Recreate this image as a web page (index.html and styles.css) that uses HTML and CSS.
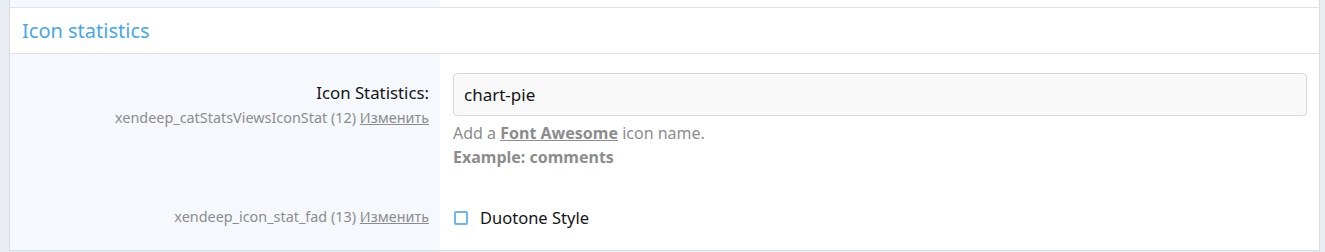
FILE: index.html
```html
<!DOCTYPE html>
<html lang="ru">
<head>
  <meta charset="UTF-8" />
  <title>Options</title>
  <link rel="stylesheet" href="styles.css">
</head>
<body>
  <div class="block">
    <div class="form-row top-row">
      <div class="form-label"></div>
      <div class="form-input"></div>
    </div>
    <h3 class="block-header">Icon statistics</h3>
    <div class="form-body">
      <div class="form-row first-row">
        <div class="form-label">
          <label class="label-main">Icon Statistics:</label>
          <div class="label-hint">xendeep_catStatsViewsIconStat (12) <a href="#">Изменить</a></div>
        </div>
        <div class="form-input">
          <input type="text" class="text-input" value="chart-pie">
          <div class="explain">Add a <a href="#">Font Awesome</a> icon name.<br><b>Example: comments</b></div>
        </div>
      </div>
      <div class="form-row check-row">
        <div class="form-label">
          <div class="label-hint">xendeep_icon_stat_fad (13) <a href="#">Изменить</a></div>
        </div>
        <div class="form-input">
          <label class="check"><span class="box"></span>Duotone Style</label>
        </div>
      </div>
    </div>
  </div>
</body>
</html>
```

FILE: styles.css
```css
body {
  margin: 0;
  background: #e9edf1;
  font-family: "Noto Sans", "Open Sans", sans-serif;
  color: #141414;
}
.block {
  margin: 0 5px 0 9px;
  border-left: 1px solid #d8dde2;
  border-right: 1px solid #d8dde2;
  border-bottom: 1px solid #d8dde2;
  background: #fff;
}
.form-row {
  display: flex;
}
.form-label {
  width: 419px;
  flex: none;
  background: #f5f9fe;
  padding: 0 11px 0 0;
  text-align: right;
}
.form-input {
  flex: 1;
  padding: 0 12px 0 13px;
}
.top-row { height: 7px; border-bottom: 1px solid #dfe3e7; }
.block-header {
  margin: 0;
  height: 45px;
  line-height: 46px;
  padding: 0 12px;
  font-size: 20px;
  font-weight: 400;
  color: #47a7eb;
  border-bottom: 1px solid #dfe3e7;
}
.first-row .form-label,
.first-row .form-input { padding-top: 19px; }
.label-main {
  display: block;
  font-size: 16.8px;
  line-height: 32px;
  padding-top: 4px;
}
.label-hint {
  font-size: 14.4px;
  color: #8c8c8c;
  line-height: 18px;
}
.label-hint a { color: #8c8c8c; }
.text-input {
  box-sizing: border-box;
  width: 100%;
  height: 43px;
  border: 1px solid #d8d8d8;
  border-radius: 4px;
  background: #f9f9f9;
  font: 17px "Noto Sans", "Open Sans", sans-serif;
  color: #141414;
  padding: 0 10px;
  outline: none;
}
.explain {
  font-size: 16px;
  color: #8c8c8c;
  line-height: 24px;
  margin-top: 5px;
}
.explain a { color: #8c8c8c; font-weight: 700; }
.check-row .form-label { padding-top: 36px; padding-bottom: 21px; }
.check-row .form-input { padding-top: 37px; padding-bottom: 20px; }
.check-row .label-hint { line-height: 24px; }
.check {
  display: flex;
  align-items: center;
  font-size: 16.5px;
  line-height: 24px;
  margin-left: 1px;
}
.box {
  width: 10px;
  height: 10px;
  border: 2px solid #69b7f0;
  border-radius: 2px;
  margin-right: 12px;
}
```
